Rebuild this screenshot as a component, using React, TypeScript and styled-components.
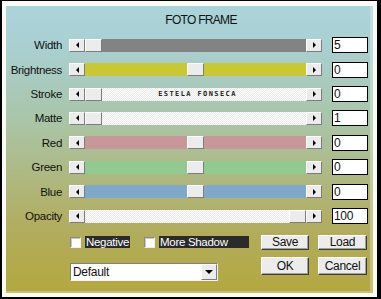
import React from "react";
import styled, { createGlobalStyle, css } from "styled-components";

const Global = createGlobalStyle`
  html, body { margin: 0; padding: 0; background: #000; }
  body { font-family: "Liberation Sans", Arial, sans-serif; }
  * { box-sizing: border-box; }
`;

const Screen = styled.div`
  width: 381px;
  height: 299px;
  background: #000;
  padding: 1px 4px 2px 2px;
`;

const Frame = styled.div`
  height: 100%;
  background: #fbfbf6;
  padding: 5px 4px 4px 4px;
`;

const Panel = styled.div`
  height: 100%;
  background: linear-gradient(
    180deg,
    #abd4da 0%,
    #a9cfd0 15%,
    #a9c6ab 38%,
    #adbb8a 55%,
    #b1ae62 75%,
    #b3a73e 100%
  );
  box-shadow: inset -3px -2px 0 rgba(255, 255, 255, 0.28);
  font-size: 11.5px;
  letter-spacing: -0.3px;
  color: #111;
`;

const Title = styled.div`
  height: 27px;
  padding-top: 7px;
  padding-left: 23px;
  line-height: 14px;
  text-align: center;
  font-size: 12px;
  letter-spacing: -0.7px;
`;

const Rows = styled.div`
  display: flex;
  flex-direction: column;
`;

const Row = styled.div`
  display: flex;
  align-items: center;
  height: 24.43px;
`;

const Label = styled.div`
  width: 56px;
  text-align: right;
  line-height: 14px;
  white-space: nowrap;
`;

const raised = css`
  background: #ececec;
  border-style: solid;
  border-width: 1px;
  border-color: #ffffff #7c7c7c #7c7c7c #ffffff;
`;

const ScrollBar = styled.div`
  margin-left: 7px;
  width: 253px;
  height: 13px;
  display: flex;
`;

const ArrowButton = styled.div`
  ${raised};
  width: 16px;
  height: 13px;
  display: flex;
  align-items: center;
  justify-content: center;
`;

const Arrow = styled.span<{ $dir: "left" | "right" | "down" }>`
  width: 0;
  height: 0;
  ${({ $dir }) =>
    $dir === "left"
      ? css`
          border-top: 3px solid transparent;
          border-bottom: 3px solid transparent;
          border-right: 3px solid #000;
        `
      : $dir === "right"
      ? css`
          border-top: 3px solid transparent;
          border-bottom: 3px solid transparent;
          border-left: 3px solid #000;
        `
      : css`
          border-left: 4px solid transparent;
          border-right: 4px solid transparent;
          border-top: 4px solid #000;
        `}
`;

type TrackKind = "solid" | "dotted";

const Track = styled.div<{ $kind: TrackKind; $color?: string }>`
  position: relative;
  flex: 1;
  height: 13px;
  display: flex;
  align-items: center;
  justify-content: center;
  ${({ $kind, $color }) =>
    $kind === "solid"
      ? css`
          background: ${$color};
        `
      : css`
          background-color: #f7f7f7;
          background-image: repeating-conic-gradient(
            #ffffff 0 25%,
            #e9e9e9 0 50%
          );
          background-size: 2px 2px;
        `}
`;

const TrackText = styled.span`
  font-family: "DejaVu Sans Mono", "Liberation Mono", monospace;
  font-weight: bold;
  font-size: 7px;
  letter-spacing: 1.4px;
  color: #222;
  padding-left: 4px;
  line-height: 8px;
`;

const Thumb = styled.div`
  ${raised};
  position: absolute;
  top: 0;
  width: 17px;
  height: 13px;
`;

const ValueBox = styled.div`
  margin-left: 10px;
  width: 36px;
  height: 16px;
  background: #fff;
  border: 1px solid #000;
  padding-left: 1px;
  line-height: 14px;
  font-size: 12px;
`;

const Bottom = styled.div`
  display: flex;
  margin-top: 6.5px;
  padding-left: 64px;
`;

const LeftCol = styled.div`
  width: 191px;
  display: flex;
  flex-direction: column;
`;

const CheckRow = styled.div`
  height: 15px;
  display: flex;
  align-items: center;
`;

const CheckBox = styled.div<{ $gapBefore?: number }>`
  width: 11px;
  height: 11px;
  margin-left: ${({ $gapBefore }) => $gapBefore ?? 0}px;
  margin-right: 4px;
  background: #fff;
  border-style: solid;
  border-width: 1px;
  border-color: #8a8a8a #f0f0f0 #f0f0f0 #8a8a8a;
  box-shadow: inset 1px 1px 0 #c8c8c8;
`;

const CheckLabel = styled.div<{ $width?: number }>`
  height: 12px;
  line-height: 12px;
  background: #2b2b2b;
  color: #fff;
  padding: 0 1px;
  white-space: nowrap;
  ${({ $width }) =>
    $width
      ? css`
          width: ${$width}px;
        `
      : ""}
`;

const Dropdown = styled.div`
  margin-top: 13px;
  width: 148px;
  height: 18px;
  background: #fff;
  border-style: solid;
  border-width: 1px;
  border-color: #808080 #f4f4f4 #f4f4f4 #808080;
  display: flex;
  align-items: center;
  justify-content: space-between;
  padding-left: 2px;
  font-size: 12px;
`;

const DropButton = styled.div`
  ${raised};
  width: 16px;
  height: 16px;
  display: flex;
  align-items: center;
  justify-content: center;
`;

const ButtonGrid = styled.div`
  display: grid;
  grid-template-columns: 48px 49px;
  grid-template-rows: 15px 18px;
  column-gap: 9px;
  row-gap: 7px;
`;

const Button = styled.div`
  background: #ececec;
  border-style: solid;
  border-width: 1px;
  border-color: #ffffff #3c3c3c #3c3c3c #ffffff;
  box-shadow: inset -1px -1px 0 #a0a0a0;
  display: flex;
  align-items: center;
  justify-content: center;
  font-size: 12px;
  line-height: 12px;
`;

type Slider = {
  label: string;
  value: number;
  min: number;
  max: number;
  kind: TrackKind;
  color?: string;
  text?: string;
};

const sliders: Slider[] = [
  { label: "Width", value: 0, min: 0, max: 100, kind: "solid", color: "#838383" },
  { label: "Brightness", value: 0, min: -100, max: 100, kind: "solid", color: "#c9c833" },
  { label: "Stroke", value: 0, min: 0, max: 100, kind: "dotted", text: "ESTELA FONSECA" },
  { label: "Matte", value: 0, min: 0, max: 100, kind: "dotted" },
  { label: "Red", value: 0, min: -100, max: 100, kind: "solid", color: "#c99699" },
  { label: "Green", value: 0, min: -100, max: 100, kind: "solid", color: "#92c991" },
  { label: "Blue", value: 0, min: -100, max: 100, kind: "solid", color: "#7fa8cb" },
  { label: "Opacity", value: 100, min: 0, max: 100, kind: "dotted" },
];

const shown = ["5", "0", "0", "1", "0", "0", "0", "100"];

const TRACK_W = 221;
const THUMB_W = 17;

export default function App() {
  return (
    <>
      <Global />
      <Screen>
        <Frame>
          <Panel>
            <Title>FOTO FRAME</Title>
            <Rows>
              {sliders.map((s, i) => {
                const frac = (s.value - s.min) / (s.max - s.min);
                const left = Math.round(frac * (TRACK_W - THUMB_W));
                return (
                  <Row key={s.label}>
                    <Label>{s.label}</Label>
                    <ScrollBar>
                      <ArrowButton>
                        <Arrow $dir="left" />
                      </ArrowButton>
                      <Track $kind={s.kind} $color={s.color}>
                        {s.text && <TrackText>{s.text}</TrackText>}
                        <Thumb style={{ left }} />
                      </Track>
                      <ArrowButton>
                        <Arrow $dir="right" />
                      </ArrowButton>
                    </ScrollBar>
                    <ValueBox>{shown[i]}</ValueBox>
                  </Row>
                );
              })}
            </Rows>
            <Bottom>
              <LeftCol>
                <CheckRow>
                  <CheckBox />
                  <CheckLabel>Negative</CheckLabel>
                  <CheckBox $gapBefore={14} />
                  <CheckLabel $width={90}>More Shadow</CheckLabel>
                </CheckRow>
                <Dropdown>
                  <span>Default</span>
                  <DropButton>
                    <Arrow $dir="down" />
                  </DropButton>
                </Dropdown>
              </LeftCol>
              <ButtonGrid>
                <Button>Save</Button>
                <Button>Load</Button>
                <Button>OK</Button>
                <Button>Cancel</Button>
              </ButtonGrid>
            </Bottom>
          </Panel>
        </Frame>
      </Screen>
    </>
  );
}
